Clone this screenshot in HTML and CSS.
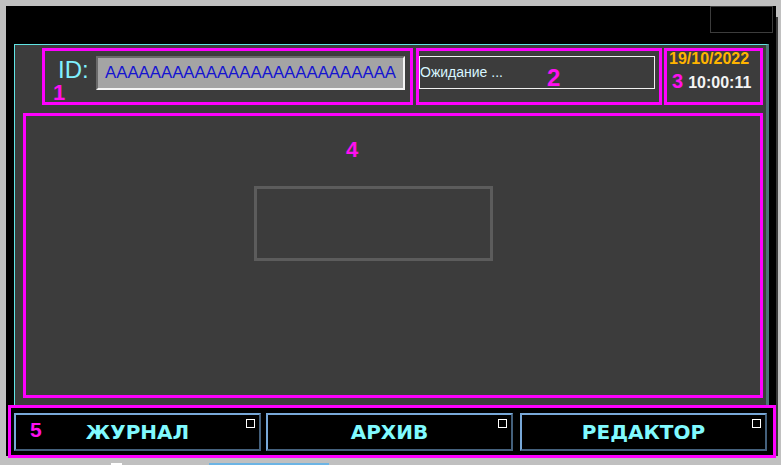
FILE: index.html
```html
<!DOCTYPE html>
<html lang="ru">
<head>
    <meta charset="UTF-8">
    <title>Панель оператора</title>
    <link rel="stylesheet" href="styles.css">
</head>
<body>
    <div class="desk">
        <div class="screen">
            <div class="topbar">
                <div class="corner-box"></div>
            </div>

            <div class="panel">
                <div class="top-row">
                    <div class="zone zone-id">
                        <span class="id-label">ID:</span>
                        <div class="id-field">AAAAAAAAAAAAAAAAAAAAAAAAAA</div>
                        <span class="mark mark-1">1</span>
                    </div>
                    <div class="zone zone-status">
                        <div class="status-box">Ожидание ...</div>
                        <span class="mark mark-2">2</span>
                    </div>
                    <div class="zone zone-clock">
                        <div class="date">19/10/2022</div>
                        <div class="time-row">
                            <span class="mark-3">3</span>
                            <span class="time">10:00:11</span>
                        </div>
                    </div>
                </div>

                <div class="zone zone-main">
                    <span class="mark mark-4">4</span>
                    <div class="placeholder"></div>
                </div>
            </div>

            <div class="zone zone-nav">
                <span class="mark mark-5">5</span>
                <button class="nav-btn">ЖУРНАЛ<span class="flag"></span></button>
                <button class="nav-btn">АРХИВ<span class="flag"></span></button>
                <button class="nav-btn">РЕДАКТОР<span class="flag"></span></button>
            </div>
        </div>
        <div class="edge"></div>
    </div>

    <div class="taskbar">
        <span class="task-white"></span>
        <span class="task-blue"></span>
    </div>
</body>
</html>
```

FILE: styles.css
```css
/* Основа */
* {
    box-sizing: border-box;
}

body {
    margin: 0;
    background-color: #c0c0c0;
    font-family: 'Liberation Sans', Arial, sans-serif;
    overflow: hidden;
    height: 465px;
}

.desk {
    display: flex;
    padding: 6px 0 0 6px;
}

/* Чёрный экран */
.screen {
    width: 770px;
    height: 450px;
    background-color: #000;
}

.edge {
    width: 2px;
    height: 439px;
    margin-top: 11px;
    background-color: #3a3a3a;
}

.topbar {
    height: 38px;
    display: flex;
    justify-content: flex-end;
    padding-right: 3px;
}

.corner-box {
    width: 63px;
    height: 27px;
    border: 1px solid #3c3c3c;
}

/* Панель с рамкой */
.panel {
    margin-left: 8px;
    width: 755px;
    height: 361px;
    background-color: #3c3c3c;
    border-top: 1px solid #60e4e4;
    border-left: 1px solid #60e4e4;
    border-right: 3px solid #4c7474;
    padding: 3px 0 0 8px;
}

.top-row {
    display: flex;
    height: 57px;
    margin-left: 19px;
}

.zone {
    position: relative;
    border: 3px solid #ff00ff;
}

.mark {
    position: absolute;
    color: #ff10f0;
    font-weight: bold;
    font-size: 22px;
    line-height: 1;
}

/* Зона 1 */
.zone-id {
    width: 371px;
    margin-right: 3px;
    display: flex;
    align-items: flex-start;
    padding: 5px 0 0 13px;
}

.id-label {
    color: #80f0ff;
    font-size: 24px;
    width: 38px;
}

.id-field {
    width: 309px;
    height: 34px;
    background-color: #a4a4a4;
    border: 2px solid;
    border-color: #6a6a6a #f4f4f4 #f4f4f4 #6a6a6a;
    color: #1414d0;
    font-size: 16.8px;
    line-height: 30px;
    padding-left: 7px;
    white-space: nowrap;
    overflow: hidden;
}

.mark-1 {
    left: 8px;
    top: 31px;
}

/* Зона 2 */
.zone-status {
    width: 246px;
    margin-right: 2px;
    padding-top: 5px;
}

.status-box {
    width: 236px;
    height: 33px;
    border: 1px solid #f0f0f0;
    color: #d8f6ff;
    font-size: 14px;
    line-height: 31px;
}

.mark-2 {
    left: 128px;
    top: 15px;
    font-size: 24px;
}

/* Зона 3 */
.zone-clock {
    width: 99px;
    padding-left: 2px;
    font-weight: bold;
}

.date {
    color: #ffb400;
    font-size: 16px;
    line-height: 16px;
}

.time-row {
    display: flex;
    align-items: baseline;
    margin-top: 4px;
    padding-left: 3px;
}

.mark-3 {
    color: #ff10f0;
    font-size: 20px;
    line-height: 20px;
}

.time {
    color: #f4f4f4;
    font-size: 16px;
    margin-left: 5px;
}

/* Зона 4 */
.zone-main {
    width: 740px;
    height: 285px;
    margin-top: 8px;
    padding: 70px 0 0 228px;
}

.mark-4 {
    left: 320px;
    top: 23px;
}

.placeholder {
    width: 239px;
    height: 75px;
    border: 3px solid #5c5c5c;
}

/* Зона 5 - кнопки */
.zone-nav {
    margin-left: 2px;
    width: 768px;
    height: 53px;
    background-color: #000;
    display: flex;
    padding: 5px 0 0 3px;
    gap: 5px;
}

.mark-5 {
    left: 19px;
    top: 11px;
    font-size: 21px;
    z-index: 1;
}

.nav-btn {
    position: relative;
    width: 247px;
    height: 38px;
    background-color: #000;
    border: 2px solid;
    border-color: #78a8d8 #44607c #44607c #78a8d8;
    color: #80faff;
    font-family: 'DejaVu Sans', 'Liberation Sans', sans-serif;
    font-weight: bold;
    font-size: 20px;
    padding: 0;
}

.nav-btn:last-child {
    margin-left: 2px;
}

.flag {
    position: absolute;
    top: 4px;
    right: 4px;
    width: 9px;
    height: 9px;
    border: 1px solid #fff;
}

/* Нижняя полоса */
.taskbar {
    display: flex;
    align-items: flex-end;
    height: 9px;
}

.task-white {
    width: 11px;
    height: 2px;
    margin-left: 111px;
    background-color: #fff;
}

.task-blue {
    width: 120px;
    height: 2px;
    margin-left: 87px;
    background-color: #6cb4e4;
}
```
